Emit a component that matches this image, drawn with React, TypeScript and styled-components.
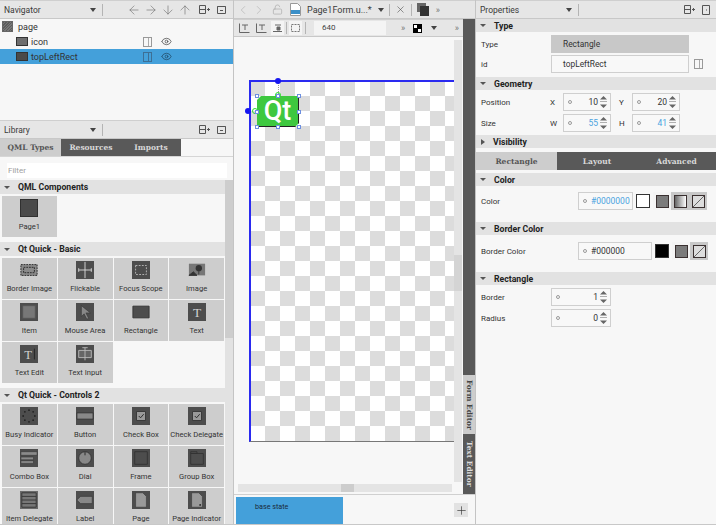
import React from "react"
import styled, { createGlobalStyle } from "styled-components"
import { ArrowLeft, ArrowRight, ArrowDown, ArrowUp, ChevronLeft, ChevronRight, X, Plus, LockOpen, Eye } from "lucide-react"

const Global = createGlobalStyle`
	html, body { margin: 0; padding: 0; overflow: hidden; background: #f7f7f7; }
	* { box-sizing: border-box; }
	body { font-family: Roboto, "Noto Sans", sans-serif; font-size: 8px; color: #2a2a2a; }
`

const Root = styled.div`
	display: grid;
	grid-template-columns: 234px 242px 240px;
	width: 716px;
	height: 525px;
	overflow: hidden;
	background: #f7f7f7;
	border-bottom: 1px solid #c8c8c8;
`

const Column = styled.div<{ $border?: boolean }>`
	display: flex;
	flex-direction: column;
	min-height: 0;
	overflow: hidden;
	border-right: ${(p) => (p.$border ? "1px solid #c4c4c4" : "none")};
`

const Bar = styled.div<{ $h?: number }>`
	display: flex;
	align-items: center;
	flex: none;
	height: ${(p) => p.$h ?? 19}px;
	padding: 0 4px;
	background: #e6e6e6;
	border-top: 1px solid #cfcfcf;
	border-bottom: 1px solid #c8c8c8;
	font-size: 8.5px;
	color: #3a3a3a;
`

const BarTitle = styled.span`
	width: 86px;
	flex: none;
`

const DropArrow = styled.i<{ $left?: number }>`
	width: 0;
	height: 0;
	margin-left: ${(p) => p.$left ?? 0}px;
	border-left: 3px solid transparent;
	border-right: 3px solid transparent;
	border-top: 4px solid #444;
	flex: none;
`

const BarSep = styled.i<{ $m?: number }>`
	width: 1px;
	height: 12px;
	background: #b4b4b4;
	margin: 0 ${(p) => p.$m ?? 4}px;
	flex: none;
`

const BarIcons = styled.div`
	display: flex;
	align-items: center;
	gap: 7px;
	margin-left: auto;
	margin-right: 2px;
	color: #666;
`

const ArrowGroup = styled.div`
	display: flex;
	align-items: center;
	gap: 3px;
`

const SplitIcon = () => (
	<svg width="11" height="11" viewBox="0 0 11 11" fill="none" stroke="#555">
		<path d="M.5 1.5h6v8h-6zM.5 5.5h6M8 5.5h3M9.5 4v3" />
	</svg>
)

const CloseBoxIcon = () => (
	<svg width="10" height="9" viewBox="0 0 10 9" fill="none" stroke="#555">
		<path d="M.5 1.5h8v7h-8zM.5 1.5h8" />
		<path d="M3 5.5h3" />
	</svg>
)

/* navigator tree */
const Tree = styled.div`
	flex: none;
	height: 101px;
	background: #f7f7f7;
`

const TreeRow = styled.div<{ $selected?: boolean; $indent?: number }>`
	display: flex;
	align-items: center;
	height: 15px;
	padding-left: ${(p) => p.$indent ?? 2}px;
	background: ${(p) => (p.$selected ? "#44a0da" : "transparent")};
	font-size: 9px;
	color: #333;
`

const TreeName = styled.span`
	margin-left: 3px;
	width: 112px;
`

const TreeThumb = styled.i<{ $hatch?: boolean }>`
	display: block;
	width: 12px;
	height: 9px;
	flex: none;
	background: ${(p) => (p.$hatch ? "#6e6e6e" : "#4a4a4a")};
	border: 1px solid #333;
`

const PageThumb = styled(TreeThumb)`
	width: 11px;
	height: 11px;
	background: repeating-linear-gradient(135deg, #5c5c5c 0 1px, #777 1px 2px);
	border-color: #666;
	margin-right: 2px;
`

const DocIcon = styled.i<{ $dark?: boolean; $left?: number }>`
	display: block;
	width: 9px;
	height: 10px;
	margin-left: ${(p) => p.$left ?? 0}px;
	flex: none;
	border: 1px solid ${(p) => (p.$dark ? "#3d6f95" : "#999")};
	background: linear-gradient(90deg, transparent 0 4px, ${(p) => (p.$dark ? "#3d6f95" : "#aaa")} 4px 5px, transparent 5px);
`

const TreeEye = styled.span`
	display: flex;
	margin-left: 9px;
	color: #444;
`

/* library */
const Tabs = styled.div`
	display: flex;
	flex: none;
	height: 18px;
	background: #f7f7f7;
	border-bottom: 1px solid #d6d6d6;
`

const Tab = styled.div<{ $active?: boolean; $w: number }>`
	display: flex;
	align-items: center;
	justify-content: center;
	width: ${(p) => p.$w}px;
	background: ${(p) => (p.$active ? "#cdcdcd" : "#595959")};
	color: ${(p) => (p.$active ? "#555" : "#d8d8d8")};
	font-family: "DejaVu Serif", serif;
	font-weight: 700;
	font-size: 7.5px;
`

const Filter = styled.div`
	flex: none;
	margin: 6px 6px 1px 7px;
	height: 15px;
	padding-left: 1px;
	background: #fff;
	color: #a0a0a0;
	line-height: 15px;
`

const LibraryBody = styled.div`
	display: flex;
	flex: 1;
	min-height: 0;
	padding-top: 1px;
`

const LibraryList = styled.div`
	flex: 1;
	min-width: 0;
	overflow: hidden;
`

const LibScroll = styled.div`
	width: 8px;
	flex: none;
	background: #e2e2e2;
	display: flex;
	flex-direction: column;
`

const LibThumb = styled.i`
	display: block;
	height: 158px;
	background: #cdcdcd;
`

const SectionHead = styled.div<{ $tall?: boolean }>`
	display: flex;
	align-items: center;
	height: ${(p) => (p.$tall ? 14 : 13)}px;
	padding-left: 4px;
	background: #e2e2e2;
	font-weight: 700;
	font-size: 8.7px;
	color: #222;
`

const Caret = styled.i<{ $closed?: boolean }>`
	display: block;
	width: 0;
	height: 0;
	margin-right: 8px;
	flex: none;
	${(p) =>
		p.$closed
			? "border-top: 3px solid transparent; border-bottom: 3px solid transparent; border-left: 4px solid #555; margin-left: 1px;"
			: "border-left: 3px solid transparent; border-right: 3px solid transparent; border-top: 3px solid #555;"}
`

const LibSection = styled.section`
	margin-bottom: 5px;
`

const TileGrid = styled.div`
	display: grid;
	grid-template-columns: repeat(4, 1fr);
	grid-auto-rows: 41px;
	gap: 1px;
	width: 222px;
	margin: 2px 0 0 2px;
`

const Tile = styled.div`
	display: flex;
	flex-direction: column;
	align-items: center;
	padding-top: 3px;
	background: #cdcdcd;
	font-size: 7.6px;
	color: #333;
	white-space: nowrap;
`

const TileCaption = styled.span`
	margin-top: 4px;
	line-height: 12px;
`

type TileKind =
	| "page" | "border" | "flick" | "focus" | "image" | "item" | "mouse" | "rect" | "text" | "tedit" | "tinput"
	| "busy" | "button" | "check" | "combo" | "dial" | "frame" | "group" | "delegate" | "label" | "doc" | "docdot"

const TileIcon = ({ kind }: { kind: TileKind }) => {
	const bg = "#4d4d4d"
	const light = "#8a8a8a"
	const content = () => {
		switch (kind) {
			case "border":
				return <path d="M1 4h18v12H1z M4 7h12v6H4z" fill={light} stroke="#222" strokeDasharray="2 1" />
			case "flick":
				return <path d="M10 1v18M3 10h14M3 8v4M17 8v4" stroke="#ddd" fill="none" />
			case "focus":
				return <path d="M4 5h12v10H4z" stroke="#bbb" fill="none" strokeDasharray="2 1.5" />
			case "image":
				return (
					<>
						<path d="M1 3h18v13H1z" fill="#777" />
						<circle cx="12" cy="8" r="3.5" fill="#333" />
						<path d="M12 9v6M1 16l5-4 4 4z" stroke="#333" fill="#333" />
					</>
				)
			case "item":
				return <path d="M3 3h14v14H3z" fill="#777" stroke="#555" />
			case "mouse":
				return <path d="M6 3l10 8h-5l3 6-2 1-3-6-3 3z" fill="#888" stroke="#333" strokeWidth=".6" />
			case "rect":
				return <path d="M1 3.5h18v13H1z" fill="#4d4d4d" stroke="#333" />
			case "text":
				return <text x="10" y="15.5" fontSize="15" fontFamily="'Liberation Serif', serif" fill="#d0d0d0" textAnchor="middle">T</text>
			case "tedit":
				return (
					<>
						<text x="9" y="15" fontSize="14" fontFamily="'Liberation Serif', serif" fill="#d0d0d0" textAnchor="middle">T</text>
						<path d="M16 4v12" stroke="#222" />
					</>
				)
			case "tinput":
				return <path d="M3 6h14v8H3zM7 3h6M10 3v14" stroke="#bbb" fill="#666" />
			case "busy":
				return (
					<>
						{[0, 1, 2, 3, 4, 5, 6, 7].map((i) => (
							<circle key={i} cx={10 + 6.5 * Math.cos((i * Math.PI) / 4)} cy={10 + 6.5 * Math.sin((i * Math.PI) / 4)} r="1" fill="#222" />
						))}
					</>
				)
			case "button":
				return <path d="M1 6.5h18v7H1z" fill="#888" stroke="#333" />
			case "check":
				return (
					<>
						<path d="M5 5h10v10H5z" fill="#999" stroke="#333" />
						<path d="M7.5 10l2 2 3.5-4" stroke="#222" fill="none" />
					</>
				)
			case "combo":
				return <path d="M1 3h18v4H1zM1 9h14v3H1zM1 13h14v3H1z" fill="#8a8a8a" stroke="#333" strokeWidth=".6" />
			case "dial":
				return (
					<>
						<circle cx="10" cy="10" r="7" fill="#888" stroke="#333" />
						<path d="M10 3.5v3.5" stroke="#222" />
					</>
				)
			case "frame":
				return <path d="M3 3h14v14H3z" fill="none" stroke="#333" />
			case "group":
				return <path d="M3 5h14v12H3zM3 5h7v-2H3z" fill="none" stroke="#333" />
			case "delegate":
				return <path d="M2 2h16v16H2zM2 6h16M2 10h16M2 14h16" fill="#777" stroke="#333" />
			case "label":
				return <path d="M1 10l4-4h13v8H5z" fill="#888" stroke="#333" strokeWidth=".6" />
			case "doc":
			case "docdot":
				return (
					<>
						<path d="M4 2h8l4 4v12H4z" fill="#999" stroke="#333" strokeWidth=".6" />
						{kind === "docdot" && <circle cx="13.5" cy="15.5" r="1" fill="#222" />}
					</>
				)
			default:
				return null
		}
	}
	return (
		<svg width="18" height="18" viewBox="0 0 20 20" style={{ flex: "none" }}>
			{kind !== "rect" && kind !== "border" && kind !== "image" && <rect x="0" y="0" width="20" height="20" fill={kind === "delegate" ? "#6a6a6a" : bg} />}
			{kind === "page" && <rect x=".5" y=".5" width="19" height="19" fill="#4a4a4a" stroke="#2e2e2e" />}
			{content()}
		</svg>
	)
}

const libSections: { title: string; items: [string, TileKind][] }[] = [
	{ title: "QML Components", items: [["Page1", "page"]] },
	{
		title: "Qt Quick - Basic",
		items: [
			["Border Image", "border"], ["Flickable", "flick"], ["Focus Scope", "focus"], ["Image", "image"],
			["Item", "item"], ["Mouse Area", "mouse"], ["Rectangle", "rect"], ["Text", "text"],
			["Text Edit", "tedit"], ["Text Input", "tinput"],
		],
	},
	{
		title: "Qt Quick - Controls 2",
		items: [
			["Busy Indicator", "busy"], ["Button", "button"], ["Check Box", "check"], ["Check Delegate", "check"],
			["Combo Box", "combo"], ["Dial", "dial"], ["Frame", "frame"], ["Group Box", "group"],
			["Item Delegate", "delegate"], ["Label", "label"], ["Page", "doc"], ["Page Indicator", "docdot"],
		],
	},
]

/* center */
const MainRow = styled.div`
	display: flex;
	flex: 1;
	min-height: 0;
`

const EditorColumn = styled.div`
	display: flex;
	flex-direction: column;
	flex: 1;
	min-width: 0;
`

const SideStrip = styled.div`
	display: flex;
	flex-direction: column;
	justify-content: flex-end;
	width: 12px;
	flex: none;
	background: #595959;
`

const SideTab = styled.div<{ $active?: boolean; $h: number }>`
	display: flex;
	align-items: center;
	justify-content: center;
	height: ${(p) => p.$h}px;
	background: ${(p) => (p.$active ? "#cdcdcd" : "#595959")};
	color: ${(p) => (p.$active ? "#444" : "#ddd")};
	writing-mode: vertical-rl;
	font-family: "DejaVu Serif", serif;
	font-weight: 700;
	font-size: 7.4px;
`

const NavBar = styled(Bar)`
	padding-left: 2px;
`

const NavIcons = styled.div`
	display: flex;
	align-items: center;
	gap: 2px;
	color: #b5b5b5;
`

const Lock = styled(LockOpen)`
	margin-left: 4px;
`

const FileIcon = styled.svg`
	margin-left: 7px;
	flex: none;
`

const FileName = styled.span`
	margin-left: 6px;
	margin-right: 6px;
	font-size: 9px;
	color: #3a3a3a;
	white-space: nowrap;
`

const Chevrons = styled.span<{ $left?: number | "auto" }>`
	font-size: 9px;
	color: #777;
	margin-left: ${(p) => (p.$left === "auto" ? "auto" : `${p.$left ?? 6}px`)};
`

const ToolBox = styled.i<{ $on?: boolean; $left?: number }>`
	display: flex;
	align-items: center;
	justify-content: center;
	width: 13px;
	height: 14px;
	margin-left: ${(p) => p.$left ?? 0}px;
	flex: none;
	background: ${(p) => (p.$on ? "#f4f4f4" : "transparent")};
`

const WidthField = styled.div`
	width: 72px;
	height: 14px;
	margin-left: 5px;
	padding-left: 8px;
	background: #f4f4f4;
	line-height: 14px;
	font-size: 8px;
	color: #444;
	flex: none;
`

const Checker = styled.svg`
	margin-left: 8px;
	flex: none;
`

const CanvasRow = styled.div`
	display: flex;
	flex: 1;
	min-height: 0;
	padding-top: 3px;
`

const Canvas = styled.div`
	position: relative;
	flex: 1;
	overflow: hidden;
`

const FormArea = styled.div`
	position: absolute;
	left: 15px;
	top: 40px;
	width: 300px;
	height: 362px;
	border-left: 2px solid #2a2af0;
	border-top: 2px solid #2a2af0;
	border-bottom: 1px solid #777;
	background-color: #fff;
	background-image: conic-gradient(#fff 25%, #dcdcdc 0 50%, #fff 0 75%, #dcdcdc 0);
	background-size: 30px 30px;
	background-position: -1px -1px;
`

const VScroll = styled.div`
	position: relative;
	width: 8px;
	flex: none;
	margin-right: 1px;
	background: #e4e4e4;
`

const VThumb = styled.i`
	position: absolute;
	left: 0;
	right: 0;
	top: 215px;
	height: 36px;
	background: #d4d4d4;
`

const HScroll = styled.div`
	position: relative;
	flex: none;
	height: 8px;
	margin: 2px 11px 2px 4px;
	background: #e4e4e4;
`

const HThumb = styled.i`
	position: absolute;
	top: 0;
	bottom: 0;
	left: 103px;
	width: 13px;
	background: #cdcdcd;
`

const QtRect = styled.div`
	position: absolute;
	left: 23px;
	top: 56px;
	width: 42px;
	height: 31px;
	border-right: 1px solid #222;
	border-bottom: 1px solid #222;
	background: #3ec83f;
	clip-path: polygon(4px 0, 100% 0, 100% calc(100% - 4px), calc(100% - 4px) 100%, 0 100%, 0 4px);
	color: #fff;
	font-family: Roboto, sans-serif;
	font-weight: 500;
	font-size: 27px;
	line-height: 30px;
	text-align: center;
`

const Handle = styled.i<{ $x: number; $y: number }>`
	position: absolute;
	left: ${(p) => p.$x - 2}px;
	top: ${(p) => p.$y - 2}px;
	width: 4px;
	height: 4px;
	background: #fff;
	border: 1px solid #6d8fe0;
`

const Dot = styled.i<{ $x: number; $y: number; $green?: boolean }>`
	position: absolute;
	left: ${(p) => p.$x - 3}px;
	top: ${(p) => p.$y - 3}px;
	width: 6px;
	height: 6px;
	border-radius: 50%;
	background: ${(p) => (p.$green ? "transparent" : "#1616f0")};
	border: ${(p) => (p.$green ? "1.5px solid #2fe02f" : "none")};
`

const AnchorLine = styled.i`
	position: absolute;
	left: 44px;
	top: 42px;
	height: 14px;
	border-left: 1px dotted #999;
`

const StatesBar = styled.div`
	display: flex;
	align-items: center;
	flex: none;
	height: 30px;
	padding: 1px 7px 0 2px;
	border-top: 1px solid #d0d0d0;
	background: #f7f7f7;
`

const StateCard = styled.div`
	width: 107px;
	height: 27px;
	padding: 5px 0 0 19px;
	background: #44a0da;
	font-size: 7.2px;
	color: #1a2a3a;
`

const AddState = styled.div`
	display: flex;
	align-items: center;
	justify-content: center;
	width: 14px;
	height: 14px;
	margin-left: auto;
	background: #e2e2e2;
	color: #333;
`

/* properties */
const PropRow = styled.div<{ $top?: number; $h?: number }>`
	display: flex;
	align-items: center;
	height: ${(p) => p.$h ?? 18}px;
	margin-top: ${(p) => p.$top ?? 3}px;
	padding-left: 5px;
	color: #333;
`

const PropLabel = styled.span<{ $w?: number }>`
	width: ${(p) => p.$w ?? 70}px;
	flex: none;
`

const PropField = styled.div<{ $gray?: boolean }>`
	width: 138px;
	height: 18px;
	padding-left: 11px;
	line-height: 16px;
	background: ${(p) => (p.$gray ? "#c8c8c8" : "#f8f8f8")};
	border: 1px solid ${(p) => (p.$gray ? "#c8c8c8" : "#cfcfcf")};
	font-size: 8.4px;
	color: #333;
	flex: none;
`

const Axis = styled.span<{ $wide?: boolean }>`
	width: 13px;
	margin-left: ${(p) => (p.$wide ? 8 : -1)}px;
	flex: none;
`

const Spin = styled.div<{ $w?: number }>`
	display: flex;
	align-items: center;
	width: ${(p) => p.$w ?? 48}px;
	height: 18px;
	padding: 0 3px 0 4px;
	background: #f8f8f8;
	border: 1px solid #cfcfcf;
	flex: none;
`

const Ring = styled.i`
	display: block;
	width: 4px;
	height: 4px;
	margin-right: 4px;
	border: 1px solid #9a9a9a;
	border-radius: 50%;
	flex: none;
`

const SpinValue = styled.span<{ $blue?: boolean }>`
	flex: 1;
	text-align: right;
	margin-right: 2px;
	font-size: 8.5px;
	color: ${(p) => (p.$blue ? "#4aa3e0" : "#333")};
`

const ColorValue = styled(SpinValue)`
	text-align: left;
	margin-right: 0;
`

const SpinArrows = () => (
	<svg width="7" height="12" viewBox="0 0 7 12" fill="#666">
		<path d="M3.5 0L7 3.5H0zM0 5h7v.6H0zM0 8.5h7L3.5 12z" />
	</svg>
)

const Swatch = styled.i<{ $black?: boolean; $left: number }>`
	display: block;
	width: 14px;
	height: 14px;
	margin-left: ${(p) => p.$left}px;
	background: ${(p) => (p.$black ? "#000" : "#fff")};
	border: 1px solid #333;
	flex: none;
`

const ModeGroup = styled.div<{ $left: number }>`
	display: flex;
	margin-left: ${(p) => p.$left}px;
	flex: none;
`

const ModeButton = styled.div<{ $on?: boolean }>`
	display: flex;
	align-items: center;
	justify-content: center;
	width: 18px;
	height: 18px;
	background: ${(p) => (p.$on ? "#f4f4f4" : "#c8c8c8")};
`

const ModeFace = styled.i<{ $mode: "solid" | "gradient" | "none" }>`
	display: block;
	width: 13px;
	height: 13px;
	border: 1px solid #3a3030;
	background: ${(p) =>
		p.$mode === "solid"
			? "#7b7b7b"
			: p.$mode === "gradient"
				? "linear-gradient(90deg, #666, #fff)"
				: "linear-gradient(135deg, #ddd 0 46%, #666 46% 54%, #ddd 54%)"};
`

const Modes = ({ list, left }: { list: ("solid" | "gradient" | "none")[]; left: number }) => (
	<ModeGroup $left={left}>
		{list.map((m, i) => (
			<ModeButton key={m} $on={i === 0}>
				<ModeFace $mode={m} />
			</ModeButton>
		))}
	</ModeGroup>
)

const PropTabs = styled(Tabs)`
	margin-top: 4px;
	height: 18px;
	border: none;
`

const SectionHeadSpaced = styled(SectionHead)<{ $top?: number }>`
	height: 13px;
	margin-top: ${(p) => p.$top ?? 0}px;
	flex: none;
`

const Section = ({ title, closed, top }: { title: string; closed?: boolean; top?: number }) => (
	<SectionHeadSpaced $top={top}>
		<Caret $closed={closed} />
		{title}
	</SectionHeadSpaced>
)

const PanelBar = ({ title, close }: { title: string; close?: React.ReactNode }) => (
	<Bar>
		<BarTitle>{title}</BarTitle>
		<DropArrow />
		<BarSep $m={6} />
		<BarIcons>
			<SplitIcon />
			{close ?? <CloseBoxIcon />}
		</BarIcons>
	</Bar>
)

const handles: [number, number][] = [
	[23, 56], [44, 56], [65, 56], [23, 72], [65, 72], [23, 87], [44, 87], [65, 87],
]

export default function App() {
	return (
		<Root>
			<Global />
			<Column $border>
				<Bar>
					<BarTitle>Navigator</BarTitle>
					<DropArrow />
					<BarSep $m={6} />
					<BarIcons>
						<ArrowGroup>
							<ArrowLeft size={14} strokeWidth={1} />
							<ArrowRight size={14} strokeWidth={1} />
							<ArrowDown size={14} strokeWidth={1} />
							<ArrowUp size={14} strokeWidth={1} />
						</ArrowGroup>
						<SplitIcon />
						<CloseBoxIcon />
					</BarIcons>
				</Bar>
				<Tree>
					<TreeRow>
						<PageThumb />
						<TreeName>page</TreeName>
					</TreeRow>
					<TreeRow $indent={16}>
						<TreeThumb $hatch />
						<TreeName>icon</TreeName>
						<DocIcon />
						<TreeEye><Eye size={11} strokeWidth={1.6} /></TreeEye>
					</TreeRow>
					<TreeRow $indent={16} $selected>
						<TreeThumb />
						<TreeName>topLeftRect</TreeName>
						<DocIcon $dark />
						<TreeEye><Eye size={11} strokeWidth={1.8} color="#24506f" /></TreeEye>
					</TreeRow>
				</Tree>
				<PanelBar title="Library" />
				<Tabs>
					<Tab $active $w={61}>QML Types</Tab>
					<Tab $w={60}>Resources</Tab>
					<Tab $w={60}>Imports</Tab>
				</Tabs>
				<Filter>Filter</Filter>
				<LibraryBody>
					<LibraryList>
						{libSections.map((s) => (
							<LibSection key={s.title}>
								<SectionHead $tall>
									<Caret />
									{s.title}
								</SectionHead>
								<TileGrid>
									{s.items.map(([name, kind]) => (
										<Tile key={name}>
											<TileIcon kind={kind} />
											<TileCaption>{name}</TileCaption>
										</Tile>
									))}
								</TileGrid>
							</LibSection>
						))}
					</LibraryList>
					<LibScroll>
						<LibThumb />
					</LibScroll>
				</LibraryBody>
			</Column>

			<Column $border>
				<NavBar>
					<NavIcons>
						<ChevronLeft size={14} strokeWidth={1.2} />
						<ChevronRight size={14} strokeWidth={1.2} />
						<Lock size={11} strokeWidth={1.8} />
					</NavIcons>
					<FileIcon width="11" height="13" viewBox="0 0 11 13">
						<path d="M.5.5h7l3 3v9H.5z" fill="#fff" stroke="#999" />
						<path d="M1 7h9v4H1z" fill="#3a8fc8" />
					</FileIcon>
					<FileName>Page1Form.u...*</FileName>
					<DropArrow />
					<BarSep $m={5} />
					<X size={11} strokeWidth={1.2} color="#444" />
					<BarSep $m={5} />
					<svg width="13" height="13" viewBox="0 0 13 13" style={{ flex: "none" }}>
						<path d="M0 0h9v9H0z" fill="#666" />
						<path d="M3 3h9v10H3z" fill="#333" />
					</svg>
					<Chevrons>»</Chevrons>
				</NavBar>
				<MainRow>
					<EditorColumn>
						<Bar $h={18}>
							<ToolBox>
								<svg width="11" height="10" viewBox="0 0 11 10" fill="none" stroke="#666"><path d="M.5.5v9h10M3 2h6M6 2v5" /></svg>
							</ToolBox>
							<ToolBox $left={4}>
								<svg width="11" height="10" viewBox="0 0 11 10" fill="none" stroke="#666"><path d="M.5.5v9h10M3 2h6M6 2v5" /></svg>
							</ToolBox>
							<ToolBox $on $left={3}>
								<svg width="11" height="10" viewBox="0 0 11 10" fill="none" stroke="#666"><path d="M1 8.5h9M3 2h6" /><path d="M5 4h3v3H5z" fill="#666" /></svg>
							</ToolBox>
							<BarSep $m={2} />
							<ToolBox $on>
								<svg width="11" height="10" viewBox="0 0 11 10" fill="none" stroke="#777" strokeDasharray="2 1"><path d="M1.5 1.5h8v7h-8z" /></svg>
							</ToolBox>
							<BarSep $m={3} />
							<WidthField>640</WidthField>
							<Chevrons $left={15}>»</Chevrons>
							<Checker width="9" height="9" viewBox="0 0 9 9">
								<path d="M0 0h9v9H0z" fill="#000" />
								<path d="M1 1h3v3H1zM5 5h3v3H5z" fill="#fff" />
							</Checker>
							<DropArrow $left={9} />
							<Chevrons $left="auto">»</Chevrons>
						</Bar>
						<CanvasRow>
							<Canvas>
								<FormArea />
								<AnchorLine />
								<Dot $x={44} $y={41} />
								<Dot $x={14} $y={71} />
								<Dot $x={44} $y={55} $green />
								<Dot $x={21} $y={71} $green />
								<QtRect>Qt</QtRect>
								{handles.map(([x, y]) => (
									<Handle key={`${x}-${y}`} $x={x} $y={y} />
								))}
							</Canvas>
							<VScroll>
								<VThumb />
							</VScroll>
						</CanvasRow>
						<HScroll>
							<HThumb />
						</HScroll>
					</EditorColumn>
					<SideStrip>
						<SideTab $active $h={59}>Form Editor</SideTab>
						<SideTab $h={60}>Text Editor</SideTab>
					</SideStrip>
				</MainRow>
				<StatesBar>
					<StateCard>base state</StateCard>
					<AddState>
						<Plus size={13} strokeWidth={1.2} />
					</AddState>
				</StatesBar>
			</Column>

			<Column>
				<PanelBar
					title="Properties"
					close={
						<svg width="8" height="10" viewBox="0 0 8 10" fill="none" stroke="#555">
							<path d="M.5.5h7v9h-7zM4 5h1" />
						</svg>
					}
				/>
				<Section title="Type" />
				<PropRow $top={3}>
					<PropLabel>Type</PropLabel>
					<PropField $gray>Rectangle</PropField>
				</PropRow>
				<PropRow $top={2}>
					<PropLabel>id</PropLabel>
					<PropField>topLeftRect</PropField>
					<DocIcon $left={5} />
				</PropRow>
				<Section title="Geometry" top={4} />
				<PropRow $top={3}>
					<PropLabel>Position</PropLabel>
					<Axis>X</Axis>
					<Spin><Ring /><SpinValue>10</SpinValue><SpinArrows /></Spin>
					<Axis $wide>Y</Axis>
					<Spin><Ring /><SpinValue>20</SpinValue><SpinArrows /></Spin>
				</PropRow>
				<PropRow $top={3}>
					<PropLabel>Size</PropLabel>
					<Axis>W</Axis>
					<Spin><Ring /><SpinValue $blue>55</SpinValue><SpinArrows /></Spin>
					<Axis $wide>H</Axis>
					<Spin><Ring /><SpinValue $blue>41</SpinValue><SpinArrows /></Spin>
				</PropRow>
				<Section title="Visibility" closed top={3} />
				<PropTabs>
					<Tab $active $w={81}>Rectangle</Tab>
					<Tab $w={80}>Layout</Tab>
					<Tab $w={79}>Advanced</Tab>
				</PropTabs>
				<Section title="Color" top={3} />
				<PropRow $top={6}>
					<PropLabel $w={97}>Color</PropLabel>
					<Spin $w={55}><Ring /><ColorValue $blue>#0000000</ColorValue></Spin>
					<Swatch $left={3} />
					<Modes list={["solid", "gradient", "none"]} left={3} />
				</PropRow>
				<Section title="Border Color" top={12} />
				<PropRow $top={7}>
					<PropLabel $w={97}>Border Color</PropLabel>
					<Spin $w={74}><Ring /><ColorValue>#000000</ColorValue></Spin>
					<Swatch $black $left={3} />
					<Modes list={["solid", "none"]} left={3} />
				</PropRow>
				<Section title="Rectangle" top={12} />
				<PropRow $top={3}>
					<PropLabel>Border</PropLabel>
					<Spin $w={60}><Ring /><SpinValue>1</SpinValue><SpinArrows /></Spin>
				</PropRow>
				<PropRow $top={3}>
					<PropLabel>Radius</PropLabel>
					<Spin $w={60}><Ring /><SpinValue>0</SpinValue><SpinArrows /></Spin>
				</PropRow>
			</Column>
		</Root>
	)
}
